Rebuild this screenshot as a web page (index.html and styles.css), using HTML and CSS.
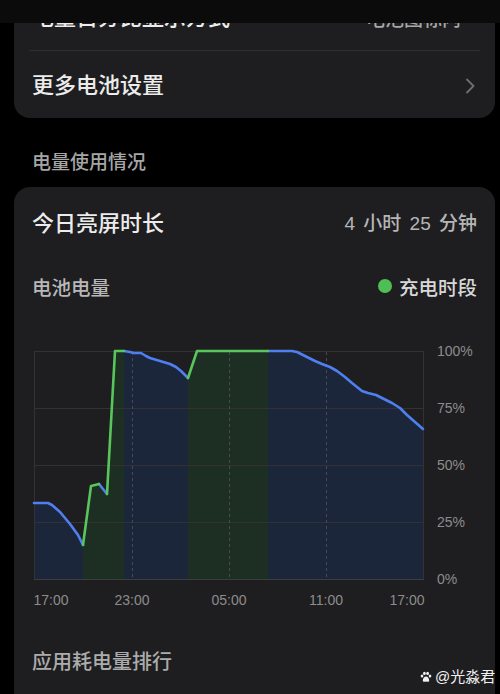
FILE: index.html
```html
<!DOCTYPE html>
<html lang="zh-CN">
<head>
<meta charset="utf-8">
<title>电量使用情况</title>
<link rel="stylesheet" href="styles.css">
</head>
<body>
<div class="topbar"></div>
<main class="page">
  <section class="card card-settings">
    <div class="row">
      <span class="row-title">电量百分比显示方式</span>
      <span class="row-value">电池图标内<svg class="chev chev-sm" viewBox="0 0 10 16"><path d="M2 2 L8 8 L2 14" /></svg></span>
    </div>
    <div class="divider"></div>
    <div class="row">
      <span class="row-title">更多电池设置</span>
      <svg class="chev" viewBox="0 0 10 16"><path d="M2 1.5 L8.5 8 L2 14.5" /></svg>
    </div>
  </section>

  <h2 class="section-label">电量使用情况</h2>

  <section class="card card-usage">
    <div class="usage-head">
      <span class="usage-title">今日亮屏时长</span>
      <span class="usage-value">4 小时 25 分钟</span>
    </div>
    <div class="legend-row">
      <span class="legend-label">电池电量</span>
      <span class="legend"><i class="dot"></i>充电时段</span>
    </div>

    <svg class="chart" width="482" height="275" viewBox="14 340 482 275">
      <defs>
        <clipPath id="under">
          <path d="M34 503 L48 503 L52 505 L60 512 L70 524 L78 535 L83 545 L91 486 L99 484 L107 494 L115 351 L124 351 L130 352 L134 353 L141 353 L146 356 L150 358 L160 361 L170 364 L176 367 L181 371 L185 375 L188 378 L197 351 L268 351 L292 351 L297 352 L305 356 L315 361 L322 364 L330 367 L337 371 L345 377 L352 383 L362 391 L368 393 L376 395 L382 398 L392 403 L400 408 L407 415 L415 422 L423 429 L423 579 L34 579 Z"/>
        </clipPath>
      </defs>
      <g clip-path="url(#under)">
        <rect x="34" y="340" width="390" height="240" class="fill-blue"/>
        <rect x="83" y="340" width="41" height="240" class="fill-green"/>
        <rect x="188" y="340" width="80" height="240" class="fill-green"/>
      </g>
      <g class="grid">
        <line x1="34" y1="351.5" x2="424" y2="351.5"/>
        <line x1="34" y1="408.5" x2="424" y2="408.5"/>
        <line x1="34" y1="465.5" x2="424" y2="465.5"/>
        <line x1="34" y1="522.5" x2="424" y2="522.5"/>
        <line x1="34.5" y1="351" x2="34.5" y2="579"/>
        <line x1="423.5" y1="351" x2="423.5" y2="579"/>
      </g>
      <line class="axis" x1="34" y1="579.5" x2="424" y2="579.5"/>
      <g class="dotted">
        <line x1="132.5" y1="352" x2="132.5" y2="579"/>
        <line x1="229.5" y1="352" x2="229.5" y2="579"/>
        <line x1="326.5" y1="352" x2="326.5" y2="579"/>
      </g>
      <g class="line-blue">
        <polyline points="34,503 48,503 52,505 60,512 70,524 78,535 83,545"/>
        <polyline points="99,484 107,494"/>
        <polyline points="124,351 130,352 134,353 141,353 146,356 150,358 160,361 170,364 176,367 181,371 185,375 188,378"/>
        <polyline points="268,351 292,351 297,352 305,356 315,361 322,364 330,367 337,371 345,377 352,383 362,391 368,393 376,395 382,398 392,403 400,408 407,415 415,422 423,429"/>
      </g>
      <g class="line-green">
        <polyline points="83,545 91,486 99,484"/>
        <polyline points="107,494 115,351 124,351"/>
        <polyline points="188,378 197,351 268,351"/>
      </g>
      <g class="ylabels">
        <text x="437" y="352">100%</text>
        <text x="437" y="409">75%</text>
        <text x="437" y="466">50%</text>
        <text x="437" y="523">25%</text>
        <text x="437" y="580">0%</text>
      </g>
      <g class="xlabels">
        <text x="51" y="601">17:00</text>
        <text x="132" y="601">23:00</text>
        <text x="229" y="601">05:00</text>
        <text x="326" y="601">11:00</text>
        <text x="407" y="601">17:00</text>
      </g>
    </svg>

    <h3 class="rank-title">应用耗电量排行</h3>
  </section>
</main>

<div class="watermark">
  <svg class="paw" viewBox="0 0 12 12">
    <ellipse cx="2" cy="5" rx="1.3" ry="1.6"/>
    <ellipse cx="4.4" cy="2.4" rx="1.4" ry="1.7"/>
    <ellipse cx="7.6" cy="2.4" rx="1.4" ry="1.7"/>
    <ellipse cx="10" cy="5" rx="1.3" ry="1.6"/>
    <path d="M6 5.6 C4.2 5.6 2.8 7.8 2.8 9.4 C2.8 11 4.2 11 6 10.6 C7.8 11 9.2 11 9.2 9.4 C9.2 7.8 7.8 5.6 6 5.6 Z"/>
  </svg>
  <span>@光淼君</span>
</div>
</body>
</html>
```

FILE: styles.css
```css
* { box-sizing: border-box; }

html, body {
  margin: 0;
  padding: 0;
  background: #000;
  width: 500px;
  height: 694px;
  overflow: hidden;
  font-family: "Liberation Sans", "Noto Sans CJK SC", sans-serif;
}

.topbar {
  position: absolute;
  left: 0;
  top: 0;
  width: 500px;
  height: 23px;
  background: #0b0b0b;
  z-index: 5;
}

.page {
  padding: 0 5px 0 14px;
}

.card {
  background: #1e1e20;
  border-radius: 16px;
}

.card-settings {
  margin-top: -17px;
}

.row {
  height: 67px;
  display: flex;
  align-items: center;
  justify-content: space-between;
  padding: 2px 20px 0 18px;
}

.row-title {
  font-size: 22px;
  line-height: 30px;
  font-weight: 500;
  color: #ececec;
}

.row-value {
  display: flex;
  align-items: center;
  gap: 6px;
  font-size: 19px;
  font-weight: 500;
  color: #a8a8a8;
}

.chev {
  width: 10px;
  height: 16px;
  fill: none;
  stroke: #6f6f72;
  stroke-width: 1.8;
  stroke-linecap: round;
  stroke-linejoin: round;
}

.chev-sm {
  width: 8px;
  height: 13px;
}

.divider {
  height: 1px;
  margin: 0 15px;
  background: #2f2f32;
}

.section-label {
  margin: 0;
  padding: 33px 0 12px 18px;
  font-size: 19px;
  line-height: 24px;
  font-weight: 500;
  color: #a6a6a6;
}

.card-usage {
  padding-bottom: 40px;
}

.usage-head {
  height: 68px;
  display: flex;
  align-items: center;
  justify-content: space-between;
  padding: 0 18px;
}

.usage-title {
  font-size: 22px;
  font-weight: 500;
  color: #ececec;
}

.usage-value {
  font-size: 19px;
  font-weight: 500;
  color: #b6b6b6;
  word-spacing: 3px;
}

.legend-row {
  height: 62px;
  display: flex;
  align-items: center;
  justify-content: space-between;
  padding: 0 18px;
}

.legend-label {
  font-size: 19.5px;
  font-weight: 500;
  color: #b8b8b8;
}

.legend {
  display: flex;
  align-items: center;
  gap: 7px;
  font-size: 19.5px;
  font-weight: 500;
  color: #d8d8d8;
}

.dot {
  width: 14px;
  height: 14px;
  border-radius: 50%;
  background: #4fbf55;
}

.chart {
  display: block;
  margin-top: 23px;
}

.fill-blue { fill: #1c263a; }
.fill-green { fill: #1d2e22; }

.grid line {
  stroke: #323235;
  stroke-width: 1;
}

.axis {
  stroke: #3d3d40;
  stroke-width: 1;
}

.dotted line {
  stroke: #4a4a4e;
  stroke-width: 1;
  stroke-dasharray: 3 3;
}

.line-blue polyline,
.line-green polyline {
  fill: none;
  stroke-width: 2.6;
  stroke-linejoin: round;
  stroke-linecap: round;
}

.line-blue polyline { stroke: #4f7ff0; }
.line-green polyline { stroke: #58c65c; }

.ylabels text,
.xlabels text {
  font-family: "Liberation Sans", "Noto Sans CJK SC", sans-serif;
  font-size: 14px;
  fill: #8c8c8c;
  dominant-baseline: middle;
}

.xlabels text { text-anchor: middle; }

.rank-title {
  margin: 32px 0 0;
  padding: 0 18px;
  font-size: 20px;
  line-height: 30px;
  font-weight: 500;
  color: #acacac;
}

.watermark {
  position: absolute;
  left: 420px;
  top: 668px;
  display: flex;
  align-items: center;
  gap: 3px;
  color: #f0f0f0;
  font-size: 15px;
  line-height: 18px;
  z-index: 6;
}

.paw {
  width: 12px;
  height: 12px;
  fill: #f0f0f0;
}
```
